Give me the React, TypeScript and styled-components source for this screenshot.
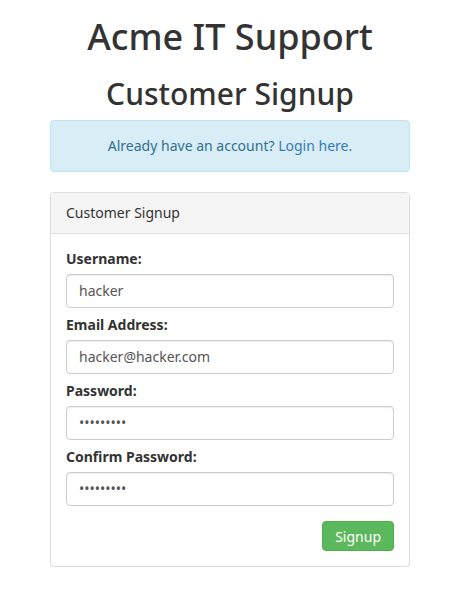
import styled, { createGlobalStyle } from "styled-components";

const GlobalStyle = createGlobalStyle`
  * {
    box-sizing: border-box;
  }
  body {
    margin: 0;
    background: #fff;
    color: #333;
    font-family: "Noto Sans", "Open Sans", sans-serif;
    font-size: 14px;
    line-height: 1.42857;
  }
`;

const Page = styled.div`
  padding: 1px 51px 0 50px;
`;

const Container = styled.div`
  width: 360px;
`;

const Title = styled.h1`
  margin: 16px 0 10px;
  font-size: 36px;
  font-weight: 500;
  line-height: 1.1;
  text-align: center;
`;

const Subtitle = styled.h2`
  margin: 20px 0 10px;
  font-size: 30px;
  font-weight: 500;
  line-height: 1.1;
  text-align: center;
`;

const Alert = styled.div`
  padding: 15px;
  margin-bottom: 20px;
  border: 1px solid #bce8f1;
  border-radius: 4px;
  background-color: #d9edf7;
  color: #31708f;
  text-align: center;
`;

const AlertLink = styled.a`
  color: #337ab7;
  text-decoration: none;
`;

const Panel = styled.div`
  border: 1px solid #ddd;
  border-radius: 4px;
  background: #fff;
  box-shadow: 0 1px 1px rgba(0, 0, 0, 0.05);
`;

const PanelHeading = styled.div`
  padding: 10px 15px;
  border-bottom: 1px solid #ddd;
  border-radius: 3px 3px 0 0;
  background-color: #f5f5f5;
  color: #333;
`;

const PanelBody = styled.form`
  display: flex;
  flex-direction: column;
  padding: 15px;
`;

const Field = styled.div`
  display: flex;
  flex-direction: column;
  margin-bottom: 7px;
`;

const Label = styled.label`
  margin-bottom: 5px;
  font-weight: 700;
`;

const Input = styled.input`
  width: 100%;
  height: 34px;
  padding: 6px 12px;
  border: 1px solid #ccc;
  border-radius: 4px;
  background: #fff;
  color: #555;
  font-family: "Noto Sans", "Open Sans", sans-serif;
  font-size: 14px;
  line-height: 1.42857;
  box-shadow: inset 0 1px 1px rgba(0, 0, 0, 0.075);
  outline: none;
`;

const Actions = styled.div`
  display: flex;
  justify-content: flex-end;
  margin-top: 8px;
`;

const SubmitButton = styled.button`
  padding: 5px 12px 3px;
  border: 1px solid #4cae4c;
  border-radius: 4px;
  background-color: #5cb85c;
  color: #fff;
  font-family: "Noto Sans", "Open Sans", sans-serif;
  font-size: 14px;
  line-height: 20px;
  cursor: pointer;
`;

const fields = [
  { id: "username", label: "Username:", type: "text", value: "hacker" },
  { id: "email", label: "Email Address:", type: "text", value: "hacker@hacker.com" },
  { id: "password", label: "Password:", type: "password", value: "hacker123" },
  { id: "confirm", label: "Confirm Password:", type: "password", value: "hacker123" },
];

const App = () => {
  return (
    <>
      <GlobalStyle />
      <Page>
        <Container>
          <Title>Acme IT Support</Title>
          <Subtitle>Customer Signup</Subtitle>
          <Alert>
            Already have an account? <AlertLink href="#">Login here.</AlertLink>
          </Alert>
          <Panel>
            <PanelHeading>Customer Signup</PanelHeading>
            <PanelBody onSubmit={(e) => e.preventDefault()}>
              {fields.map((field) => (
                <Field key={field.id}>
                  <Label htmlFor={field.id}>{field.label}</Label>
                  <Input id={field.id} type={field.type} defaultValue={field.value} />
                </Field>
              ))}
              <Actions>
                <SubmitButton type="submit">Signup</SubmitButton>
              </Actions>
            </PanelBody>
          </Panel>
        </Container>
      </Page>
    </>
  );
};

export default App;
